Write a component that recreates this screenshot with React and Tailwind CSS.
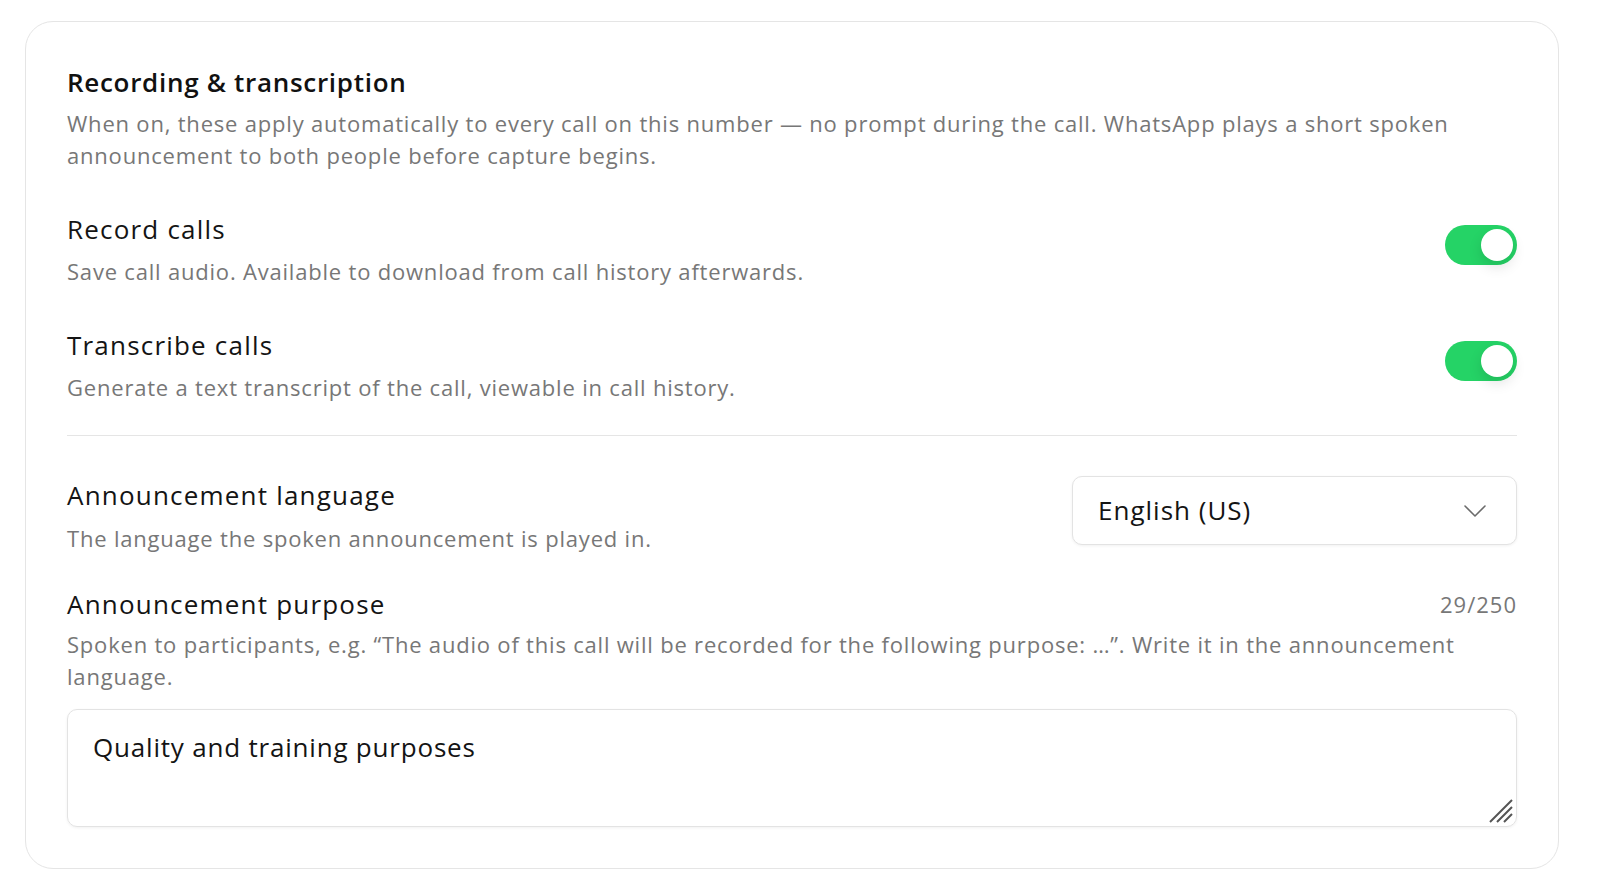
import React, { useState } from "react";

function Toggle({ on, onChange }) {
  return (
    <button
      type="button"
      onClick={() => onChange(!on)}
      className={`relative mt-[12px] h-[40px] w-[72px] shrink-0 rounded-full ${on ? "bg-[#25d366]" : "bg-[#d4d4d4]"}`}
    >
      <span
        className={`absolute top-[4px] h-[32px] w-[32px] rounded-full bg-white shadow-[0_6px_14px_rgba(0,0,0,0.12)] ${on ? "left-[36px]" : "left-[4px]"}`}
      />
    </button>
  );
}

function SettingRow({ title, desc, on, onChange }) {
  return (
    <div className="flex items-start justify-between gap-6">
      <div>
        <div className="text-[26px] leading-[32px] tracking-[1.2px] text-[#141414]">{title}</div>
        <div className="mt-[10px] text-[22px] leading-[32px] tracking-[0.8px] text-[#777]">{desc}</div>
      </div>
      <Toggle on={on} onChange={onChange} />
    </div>
  );
}

export default function App() {
  const [record, setRecord] = useState(true);
  const [transcribe, setTranscribe] = useState(true);
  const [purpose, setPurpose] = useState("Quality and training purposes");

  return (
    <div className="min-h-screen bg-white pl-[25px] pr-[45px] pt-[21px] font-['Open_Sans',sans-serif]">
      <section className="rounded-[28px] border border-[#e5e5e5] px-[41px] pt-[44px] pb-[41px]">
        <h2 className="text-[26px] leading-[32px] tracking-[0.7px] font-semibold text-[#111]">Recording &amp; transcription</h2>
        <p className="mt-[9px] text-[22px] leading-[32px] tracking-[0.8px] text-[#777]">
          When on, these apply automatically to every call on this number — no prompt during the call. WhatsApp plays a short spoken announcement to both people before capture begins.
        </p>

        <div className="mt-[42px] flex flex-col gap-[42px]">
          <SettingRow
            title="Record calls"
            desc="Save call audio. Available to download from call history afterwards."
            on={record}
            onChange={setRecord}
          />
          <SettingRow
            title="Transcribe calls"
            desc="Generate a text transcript of the call, viewable in call history."
            on={transcribe}
            onChange={setTranscribe}
          />
        </div>

        <div className="mt-[32px] border-t border-[#e5e5e5]" />

        <div className="mt-[40px] flex items-start justify-between gap-6">
          <div className="pt-[3px]">
            <div className="text-[26px] leading-[32px] tracking-[1.2px] text-[#141414]">Announcement language</div>
            <div className="mt-[11px] text-[22px] leading-[32px] tracking-[0.8px] text-[#777]">The language the spoken announcement is played in.</div>
          </div>
          <button
            type="button"
            className="flex h-[69px] w-[445px] shrink-0 items-center justify-between rounded-[10px] border border-[#e3e3e3] bg-white pl-[25px] pr-[30px] shadow-[0_1px_3px_rgba(0,0,0,0.06)]"
          >
            <span className="text-[26px] tracking-[1px] text-[#141414]">English (US)</span>
            <svg width="22" height="12" viewBox="0 0 22 12" fill="none" className="text-[#6b6b6b]">
              <path d="M1 1l10 10 10-10" stroke="currentColor" strokeWidth="1.6" strokeLinecap="round" strokeLinejoin="round" />
            </svg>
          </button>
        </div>

        <div className="mt-[34px] flex items-center justify-between">
          <div className="text-[26px] leading-[32px] tracking-[1.2px] text-[#141414]">Announcement purpose</div>
          <div className="text-[22px] leading-[32px] tracking-[1px] text-[#777]">{purpose.length}/250</div>
        </div>
        <p className="mt-[8px] text-[22px] leading-[32px] tracking-[0.8px] text-[#777]">
          Spoken to participants, e.g. “The audio of this call will be recorded for the following purpose: …”. Write it in the announcement language.
        </p>
        <div className="relative mt-[17px]">
          <textarea
            value={purpose}
            onChange={(e) => setPurpose(e.target.value)}
            maxLength={250}
            className="block h-[118px] w-full resize-none rounded-[10px] border border-[#e3e3e3] px-[25px] pt-[21px] pb-[20px] text-[26px] leading-[32px] tracking-[0.8px] text-[#141414] shadow-[0_1px_3px_rgba(0,0,0,0.06)] outline-none"
          />
          <svg width="26" height="26" viewBox="0 0 26 26" className="pointer-events-none absolute bottom-[3px] right-[3px] text-[#555]">
            <path d="M2 24L24 2M9 24L24 9M16 24L24 16" stroke="currentColor" strokeWidth="2" />
          </svg>
        </div>
      </section>
    </div>
  );
}
